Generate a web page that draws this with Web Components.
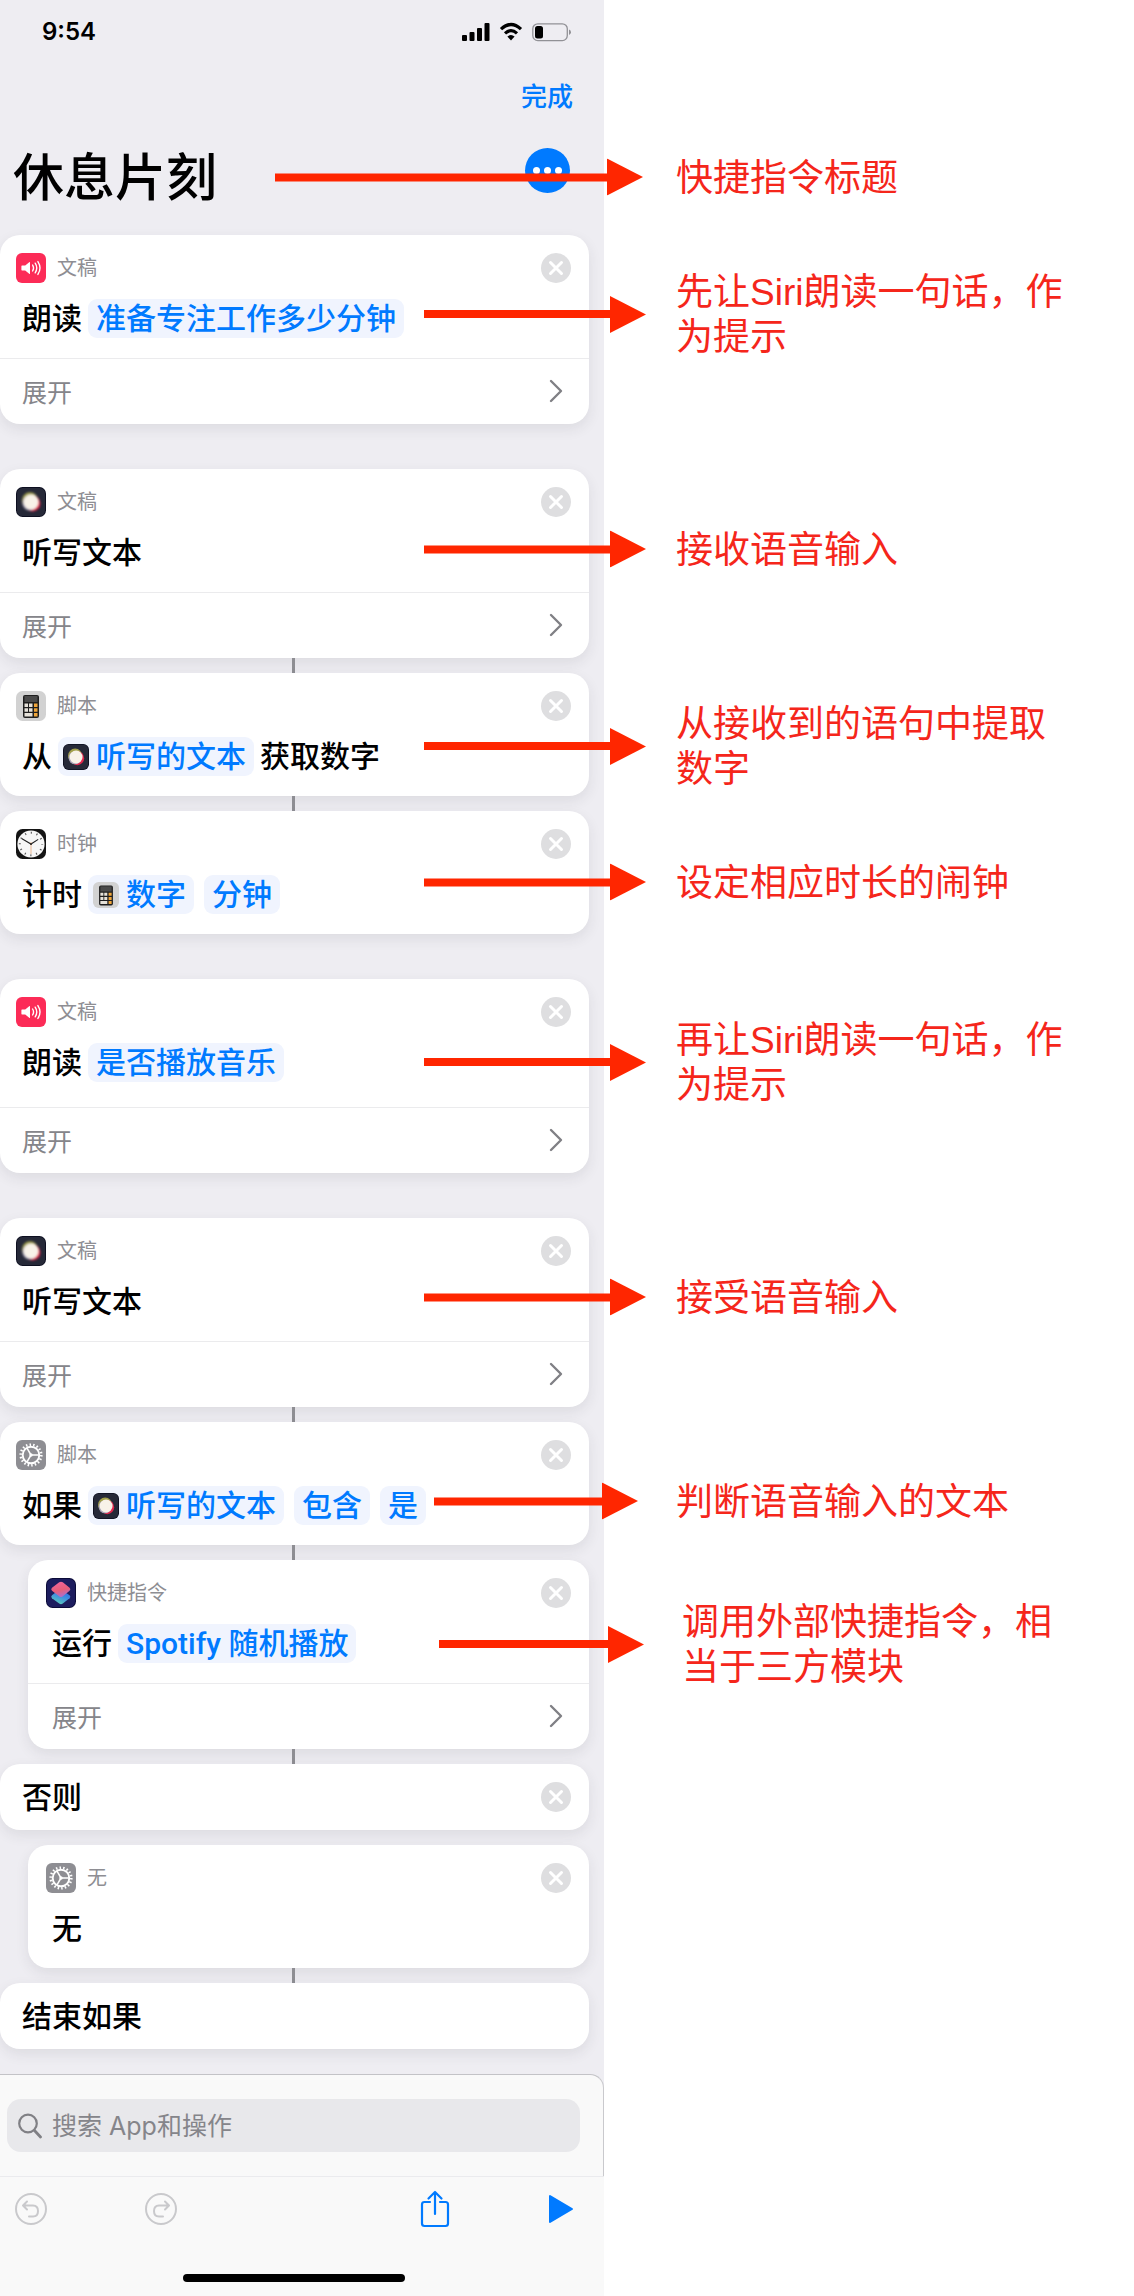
<!DOCTYPE html>
<html lang="zh-CN">
<head>
<meta charset="utf-8">
<meta name="viewport" content="width=device-width, initial-scale=1">
<title>休息片刻</title>
<style>
  body {
    margin: 0;
    background: #fff;
    color: #000;
    font-family: Inter, "Noto Sans CJK SC", sans-serif;
  }
</style>
</head>
<body>
<annotated-screen>
  <shortcut-editor slot="screen" heading="休息片刻">
    <step-group>
      <step-card icon="speak" label="文稿" removable expandable>朗读 <value-token>准备专注工作多少分钟</value-token></step-card>
    </step-group>
    <step-group>
      <step-card icon="dictate" label="文稿" removable expandable linked>听写文本</step-card>
      <step-card icon="calculator" label="脚本" removable linked>从 <value-token icon="dictate">听写的文本</value-token> 获取数字</step-card>
      <step-card icon="clock" label="时钟" removable>计时 <value-token icon="calculator">数字</value-token><value-token>分钟</value-token></step-card>
    </step-group>
    <step-group>
      <step-card icon="speak" label="文稿" removable expandable roomy>朗读 <value-token>是否播放音乐</value-token></step-card>
    </step-group>
    <step-group>
      <step-card icon="dictate" label="文稿" removable expandable linked>听写文本</step-card>
      <step-card icon="gear" label="脚本" removable linked>如果 <value-token icon="dictate">听写的文本</value-token><value-token>包含</value-token><value-token>是</value-token></step-card>
      <step-card icon="shortcuts" label="快捷指令" removable expandable nested linked>运行 <value-token>Spotify 随机播放</value-token></step-card>
      <step-card removable>否则</step-card>
      <step-card icon="gear" label="无" removable nested linked>无</step-card>
      <step-card>结束如果</step-card>
    </step-group>
  </shortcut-editor>
  <call-out slot="notes" y="177" from="275" to="643">快捷指令标题</call-out>
  <call-out slot="notes" y="314" from="424" to="646">先让Siri朗读一句话，作为提示</call-out>
  <call-out slot="notes" y="549" from="424" to="646">接收语音输入</call-out>
  <call-out slot="notes" y="746" from="424" to="646">从接收到的语句中提取数字</call-out>
  <call-out slot="notes" y="882" from="424" to="646">设定相应时长的闹钟</call-out>
  <call-out slot="notes" y="1062" from="424" to="646">再让Siri朗读一句话，作为提示</call-out>
  <call-out slot="notes" y="1297" from="424" to="646">接受语音输入</call-out>
  <call-out slot="notes" y="1501" from="434" to="638">判断语音输入的文本</call-out>
  <call-out slot="notes" y="1644" from="439" to="644" text="682">调用外部快捷指令，相当于三方模块</call-out>
</annotated-screen>

<script>
const icons = {
  speak: `<svg viewBox="0 0 30 30"><rect width="30" height="30" rx="6" fill="#fc2b57"/>
    <path d="M6 12.6h3.2l4-3.4q.8-.6.8.4v10.8q0 1-.8.4l-4-3.4H6q-.6 0-.6-.6v-3.6q0-.6.6-.6z" fill="#fff"/>
    <path d="M16.6 12q1.9 3 0 6M19.2 10.2q3.1 4.8 0 9.6M21.9 8.6q4.2 6.4 0 12.8" fill="none" stroke="#fff" stroke-width="1.4" stroke-linecap="round"/></svg>`,
  dictate: `<svg viewBox="0 0 30 30"><defs><filter id="b" x="-50%" y="-50%" width="200%" height="200%"><feGaussianBlur stdDeviation=".8"/></filter></defs>
    <rect width="30" height="30" rx="6.500" fill="#0d0f20"/><rect x="1" y="1" width="28" height="28" rx="5.500" fill="#262938"/>
    <g filter="url(#b)"><circle cx="14" cy="13.500" r="8.200" fill="#a3a04c"/><circle cx="16.400" cy="16.400" r="8" fill="#e2284e"/><circle cx="13.800" cy="16" r="7.400" fill="#a9a4b8"/><circle cx="15.100" cy="15" r="7.500" fill="#f8f2e8"/></g></svg>`,
  calculator: `<svg viewBox="0 0 30 30"><rect width="30" height="30" rx="6.500" fill="#d2d2d2"/>
    <rect x="7" y="4" width="16" height="23" rx="2" fill="#1f1f1f"/><rect x="8.500" y="5" width="13" height="6" fill="#4a4a4a"/>
    <path d="M8.500 12.500h3.500v3.500H8.500zM13 12.500h3.500v3.500H13zM8.500 17.200h3.500v3.500H8.500zM13 17.200h3.500v3.500H13zM8.500 22h8v3.500h-8z" fill="#e6e2da"/>
    <path d="M18 12.500h3.500v3.500H18zM18 17.200h3.500v3.500H18zM18 22h3.500v3.500H18z" fill="#f0a63a"/></svg>`,
  clock: `<svg viewBox="0 0 30 30"><rect width="30" height="30" rx="6.500" fill="#141414"/><circle cx="15" cy="15" r="13.600" fill="#f7f7f7"/>
    <circle cx="15" cy="15" r="11.200" fill="none" stroke="#555" stroke-width="2" stroke-dasharray="1.100 4.764" stroke-dashoffset=".55"/>
    <path d="M6 9.800L15 15l7.200-4.600" fill="none" stroke="#222" stroke-width="1.100"/><path d="M15 13v12" stroke="#e9a87a" stroke-width=".8"/><circle cx="15" cy="15" r="1" fill="#222"/></svg>`,
  gear: `<svg viewBox="0 0 30 30"><rect width="30" height="30" rx="6" fill="#8e8e93"/>
    <circle cx="15" cy="15" r="10.300" fill="none" stroke="#fff" stroke-width="2.600" stroke-dasharray="1.500 2.095"/>
    <circle cx="15" cy="15" r="8.300" fill="none" stroke="#fff" stroke-width="1.900"/>
    <path d="M15 15h8M15 15l-4-6.900M15 15l-4 6.900" stroke="#fff" stroke-width="1.500"/><circle cx="15" cy="15" r="1.700" fill="#fff"/></svg>`,
  shortcuts: `<svg viewBox="0 0 30 30"><defs>
    <linearGradient id="t" x1=".3" y1="0" x2=".6" y2="1"><stop offset="0" stop-color="#f2649c"/><stop offset=".55" stop-color="#e85f78"/><stop offset="1" stop-color="#a86fd0"/></linearGradient>
    <linearGradient id="u" x1=".8" y1="0" x2=".3" y2="1"><stop offset="0" stop-color="#2a62e0"/><stop offset=".5" stop-color="#3f8fe0"/><stop offset="1" stop-color="#5ccdb8"/></linearGradient></defs>
    <rect width="30" height="30" rx="6.500" fill="#0b0b38"/><rect x="1" y="1" width="28" height="28" rx="5.500" fill="#1d1d5e"/>
    <path d="M14 11L6 17.300q-1.600 1.500 0 3l7.200 5.300q1.800 1.100 3.600 0l6.800-5.300q1.600-1.500 0-3z" fill="url(#u)"/>
    <path d="M13.200 4.200L6 9.700q-1.600 1.500 0 3l7.400 5.800q1.600 1 3.200 0l7-5.800q1.600-1.500 0-3l-6.800-5.500q-1.800-1.100-3.600 0z" fill="url(#t)"/></svg>`
};

const define = (name, render) => customElements.define(name, class extends HTMLElement {
  constructor() {
    super();
    this.attachShadow({ mode: "open" });
  }
  connectedCallback() {
    const attr = (key) => this.getAttribute(key) || "";
    const has = (key) => this.hasAttribute(key);
    this.shadowRoot.innerHTML = render(attr, has);
  }
});

define("app-icon", (attr) => `
  <style>
    :host { display: block; flex: none; width: 30px; height: 30px; }
    svg { display: block; width: 100%; height: 100%; }
  </style>${icons[attr("name")]}`);

define("value-token", (attr, has) => `
  <style>
    :host { display: inline-flex; }
    :host(:not(:first-child)) { margin-left: 4px; }
    button { display: flex; align-items: center; gap: 7px; height: 39px; padding: 0 8px; border: 0; border-radius: 9px;
      background: #f0f4fe; color: #007aff; font: inherit; font-family: Roboto, "Noto Sans CJK SC", sans-serif; white-space: nowrap; }
    .with-icon { padding-left: 5px; }
    app-icon { width: 26px; height: 26px; }
  </style>
  <button type="button" class="${has("icon") ? "with-icon" : ""}">
    ${has("icon") ? `<app-icon name="${attr("icon")}"></app-icon>` : ""}<span><slot></slot></span>
  </button>`);

define("remove-button", () => `
  <style>
    :host { display: block; margin-left: auto; }
    button { display: block; width: 30px; height: 30px; padding: 0; border: 0; border-radius: 50%; background: #dedee0; }
    svg { display: block; width: 30px; height: 30px; }
  </style>
  <button type="button" aria-label="移除"><svg viewBox="0 0 30 30"><path d="M9.500 9.500l11 11M20.500 9.500l-11 11" stroke="#fff" stroke-width="3" stroke-linecap="round"/></svg></button>`);

define("step-card", (attr, has) => `
  <style>
    :host { display: block; }
    :host([nested]) { margin-left: 28px; }
    article { background: #fff; border-radius: 20px; box-shadow: 0 5px 14px rgba(40, 40, 60, .09); }
    header { display: flex; align-items: center; gap: 11px; padding: 18px 18px 0 16px; color: #8e8e93; font-size: 20px; line-height: 30px; }
    :host([nested]) header { padding-left: 18px; }
    .action { display: flex; align-items: center; gap: 6px; min-height: 39px; padding: 16px 18px 20px 22px; font-size: 30px; line-height: 39px; font-weight: 500; }
    :host([nested]) .action { padding-left: 24px; }
    :host([roomy]) .action { padding-bottom: 25px; }
    .bare .action { min-height: 66px; padding-top: 0; padding-bottom: 0; }
    .expand { display: flex; align-items: center; justify-content: space-between; width: 100%; height: 66px; padding: 0 26px 2px 22px;
      border: 0; border-top: 1px solid #ebebed; background: none; color: #85858a; font: inherit; font-size: 25px; }
    :host([nested]) .expand { padding-left: 24px; }
    .expand svg { display: block; width: 14px; height: 24px; }
    .link { width: 3px; height: 15px; margin-left: 292px; background: #8e8e93; }
    :host([nested]) .link { margin-left: 264px; }
    .gap { height: 15px; }
  </style>
  <article class="${has("label") ? "" : "bare"}">
    ${has("label") ? `<header><app-icon name="${attr("icon")}"></app-icon><span>${attr("label")}</span>${has("removable") ? "<remove-button></remove-button>" : ""}</header>` : ""}
    <div class="action"><slot></slot>${!has("label") && has("removable") ? "<remove-button></remove-button>" : ""}</div>
    ${has("expandable") ? `<button type="button" class="expand"><span>展开</span>
      <svg viewBox="0 0 14 24"><path d="M2 2l10 10L2 22" fill="none" stroke="#808085" stroke-width="2.400" stroke-linecap="round" stroke-linejoin="round"/></svg></button>` : ""}
  </article>
  <div class="${has("linked") ? "link" : "gap"}"></div>`);

define("step-group", () => `
  <style>
    :host { display: block; padding-bottom: 30px; }
    :host(:last-child) { padding-bottom: 10px; }
  </style><slot></slot>`);

define("status-bar", () => `
  <style>
    :host { display: flex; align-items: center; height: 63px; padding: 0 33px 0 42px; }
    time { font-size: 24px; line-height: 30px; font-weight: 600; }
    svg { display: block; height: 20px; }
    .signal { width: 28px; margin-left: auto; }
    .wifi { width: 24px; margin: 0 9px; }
    .battery { width: 39px; }
  </style>
  <time>9:54</time>
  <svg class="signal" viewBox="0 0 28 20"><rect y="13" width="5" height="6" rx="1"/><rect x="7.500" y="10" width="5" height="9" rx="1"/><rect x="15" y="6" width="5" height="13" rx="1"/><rect x="22.500" y="1" width="5" height="18" rx="1"/></svg>
  <svg class="wifi" viewBox="0 0 24 20"><path d="M2 7.200Q12-2.200 22 7.200M6 11.400q6-5.400 12 0" fill="none" stroke="#000" stroke-width="3.200"/><path d="M8.400 14.600q3.600-3 7.200 0L12 18.600z"/></svg>
  <svg class="battery" viewBox="0 0 39 20"><rect x=".8" y="1.800" width="34.500" height="16.800" rx="5" fill="none" stroke="#919196" stroke-width="1.300"/><rect x="3" y="4" width="8" height="12.500" rx="2.500"/><path d="M37 7.500q2 .8 2 2.700t-2 2.700z" fill="#919196"/></svg>`);

define("editor-dock", () => `
  <style>
    :host { display: block; }
    search { display: block; padding: 24px 23px 24px 7px; border-top: 1px solid #c3c3c7; border-right: 1px solid #c9c9cd; border-radius: 0 14px 0 0; background: #f9f9f9; }
    label { display: flex; align-items: center; gap: 10px; height: 53px; padding: 0 11px; border-radius: 14px; background: #e8e8eb; }
    label svg { width: 24px; height: 26px; flex: none; }
    input { flex: 1; min-width: 0; padding: 0; border: 0; outline: 0; background: none; color: #000; font: inherit; font-size: 25px; line-height: 36px; }
    input::placeholder { color: #85858a; opacity: 1; }
    footer { padding-bottom: 14px; background: #f9f9f9; }
    nav { display: flex; align-items: center; gap: 98px; height: 64px; padding: 0 30px 0 15px; border-top: 1px solid #ebebee; }
    nav button { display: block; padding: 0; border: 0; background: none; }
    nav svg { display: block; height: 38px; fill: none; stroke-linecap: round; stroke-linejoin: round; }
    .history svg { width: 32px; stroke: #c9c9cc; stroke-width: 2; }
    .share { margin-left: auto; }
    .share svg { width: 30px; stroke: #007aff; stroke-width: 2.200; }
    .run svg { width: 26px; fill: #007aff; stroke: #007aff; stroke-width: 2; }
    .home { width: 222px; height: 8px; margin: 33px 0 0 183px; border-radius: 4px; background: #000; }
  </style>
  <search><label aria-label="搜索 App和操作">
    <svg viewBox="0 0 24 26"><circle cx="10" cy="10.500" r="8.800" fill="none" stroke="#808085" stroke-width="2.200"/><path d="M16.500 17.500l6 6.500" stroke="#808085" stroke-width="2.800" stroke-linecap="round"/></svg>
    <input type="search" placeholder="搜索 App和操作">
  </label></search>
  <footer><nav>
    <button type="button" class="history" aria-label="撤销"><svg viewBox="0 0 32 38"><circle cx="16" cy="19" r="15"/><path d="M12 11.500l-4 4 4 4M8.500 15.500h9.500q5 0 5 5.500t-5 5.500h-4"/></svg></button>
    <button type="button" class="history" aria-label="重做"><svg viewBox="0 0 32 38"><circle cx="16" cy="19" r="15"/><path d="M20 11.500l4 4-4 4M23.500 15.500H14q-5 0-5 5.500t5 5.500h4"/></svg></button>
    <button type="button" class="share" aria-label="共享"><svg viewBox="0 0 30 38"><path d="M10 12H4.500Q2 12 2 14.500v19Q2 36 4.500 36h21q2.500 0 2.500-2.500v-19q0-2.500-2.500-2.500H20M15 24V2M8.500 8.500L15 2l6.500 6.500"/></svg></button>
    <button type="button" class="run" aria-label="运行"><svg viewBox="0 0 26 38"><path d="M2 6v26l22-13z"/></svg></button>
  </nav>
  <div class="home"></div></footer>`);

define("shortcut-editor", (attr) => `
  <style>
    :host { display: block; background: #eeedf2; }
    .done { display: flex; justify-content: flex-end; padding: 15px 31px 0; }
    .done button { padding: 0; border: 0; background: none; color: #007aff; font: inherit; font-size: 26px; line-height: 38px; font-weight: 500; }
    .title { display: flex; align-items: center; justify-content: space-between; height: 70px; padding: 27px 34px 22px 13px; }
    h1 { margin: 0; font-size: 51px; line-height: 70px; font-weight: 500; }
    .title button { width: 45px; height: 45px; margin-bottom: 16px; padding: 0; border: 0; border-radius: 50%; background: #007aff; }
    .title svg { display: block; width: 45px; height: 45px; }
    main { padding-right: 15px; }
  </style>
  <status-bar></status-bar>
  <div class="done"><button type="button">完成</button></div>
  <div class="title"><h1>${attr("heading")}</h1>
    <button type="button" aria-label="更多"><svg viewBox="0 0 45 45" fill="#fff"><circle cx="11.500" cy="22.500" r="3.500"/><circle cx="22.500" cy="22.500" r="3.500"/><circle cx="33.500" cy="22.500" r="3.500"/></svg></button></div>
  <main><slot></slot></main>
  <editor-dock></editor-dock>`);

define("call-out", (attr) => `
  <style>
    :host { position: absolute; top: ${attr("y")}px; left: ${attr("from")}px; display: flex; align-items: center; transform: translateY(-50%);
      color: #f5261b; font: 37px/45px "Liberation Sans", "Noto Sans CJK SC", sans-serif; }
    .arrow { display: flex; align-items: center; width: ${attr("to") - attr("from")}px; }
    .shaft { flex: 1; height: 8px; background: #ff2600; }
    svg { display: block; width: 36px; height: 37px; }
    p { width: 400px; margin: 0 0 0 ${(attr("text") || 676) - attr("to")}px; padding-top: 2px; }
  </style>
  <div class="arrow"><div class="shaft"></div><svg viewBox="0 0 36 37"><path d="M0 0l36 18.500L0 37z" fill="#ff2600"/></svg></div>
  <p><slot></slot></p>`);

define("annotated-screen", () => `
  <style>
    :host { position: relative; display: grid; grid-template-columns: minmax(0, 604px) 1fr; }
  </style>
  <slot name="screen"></slot>
  <slot name="notes"></slot>`);
</script>
</body>
</html>
